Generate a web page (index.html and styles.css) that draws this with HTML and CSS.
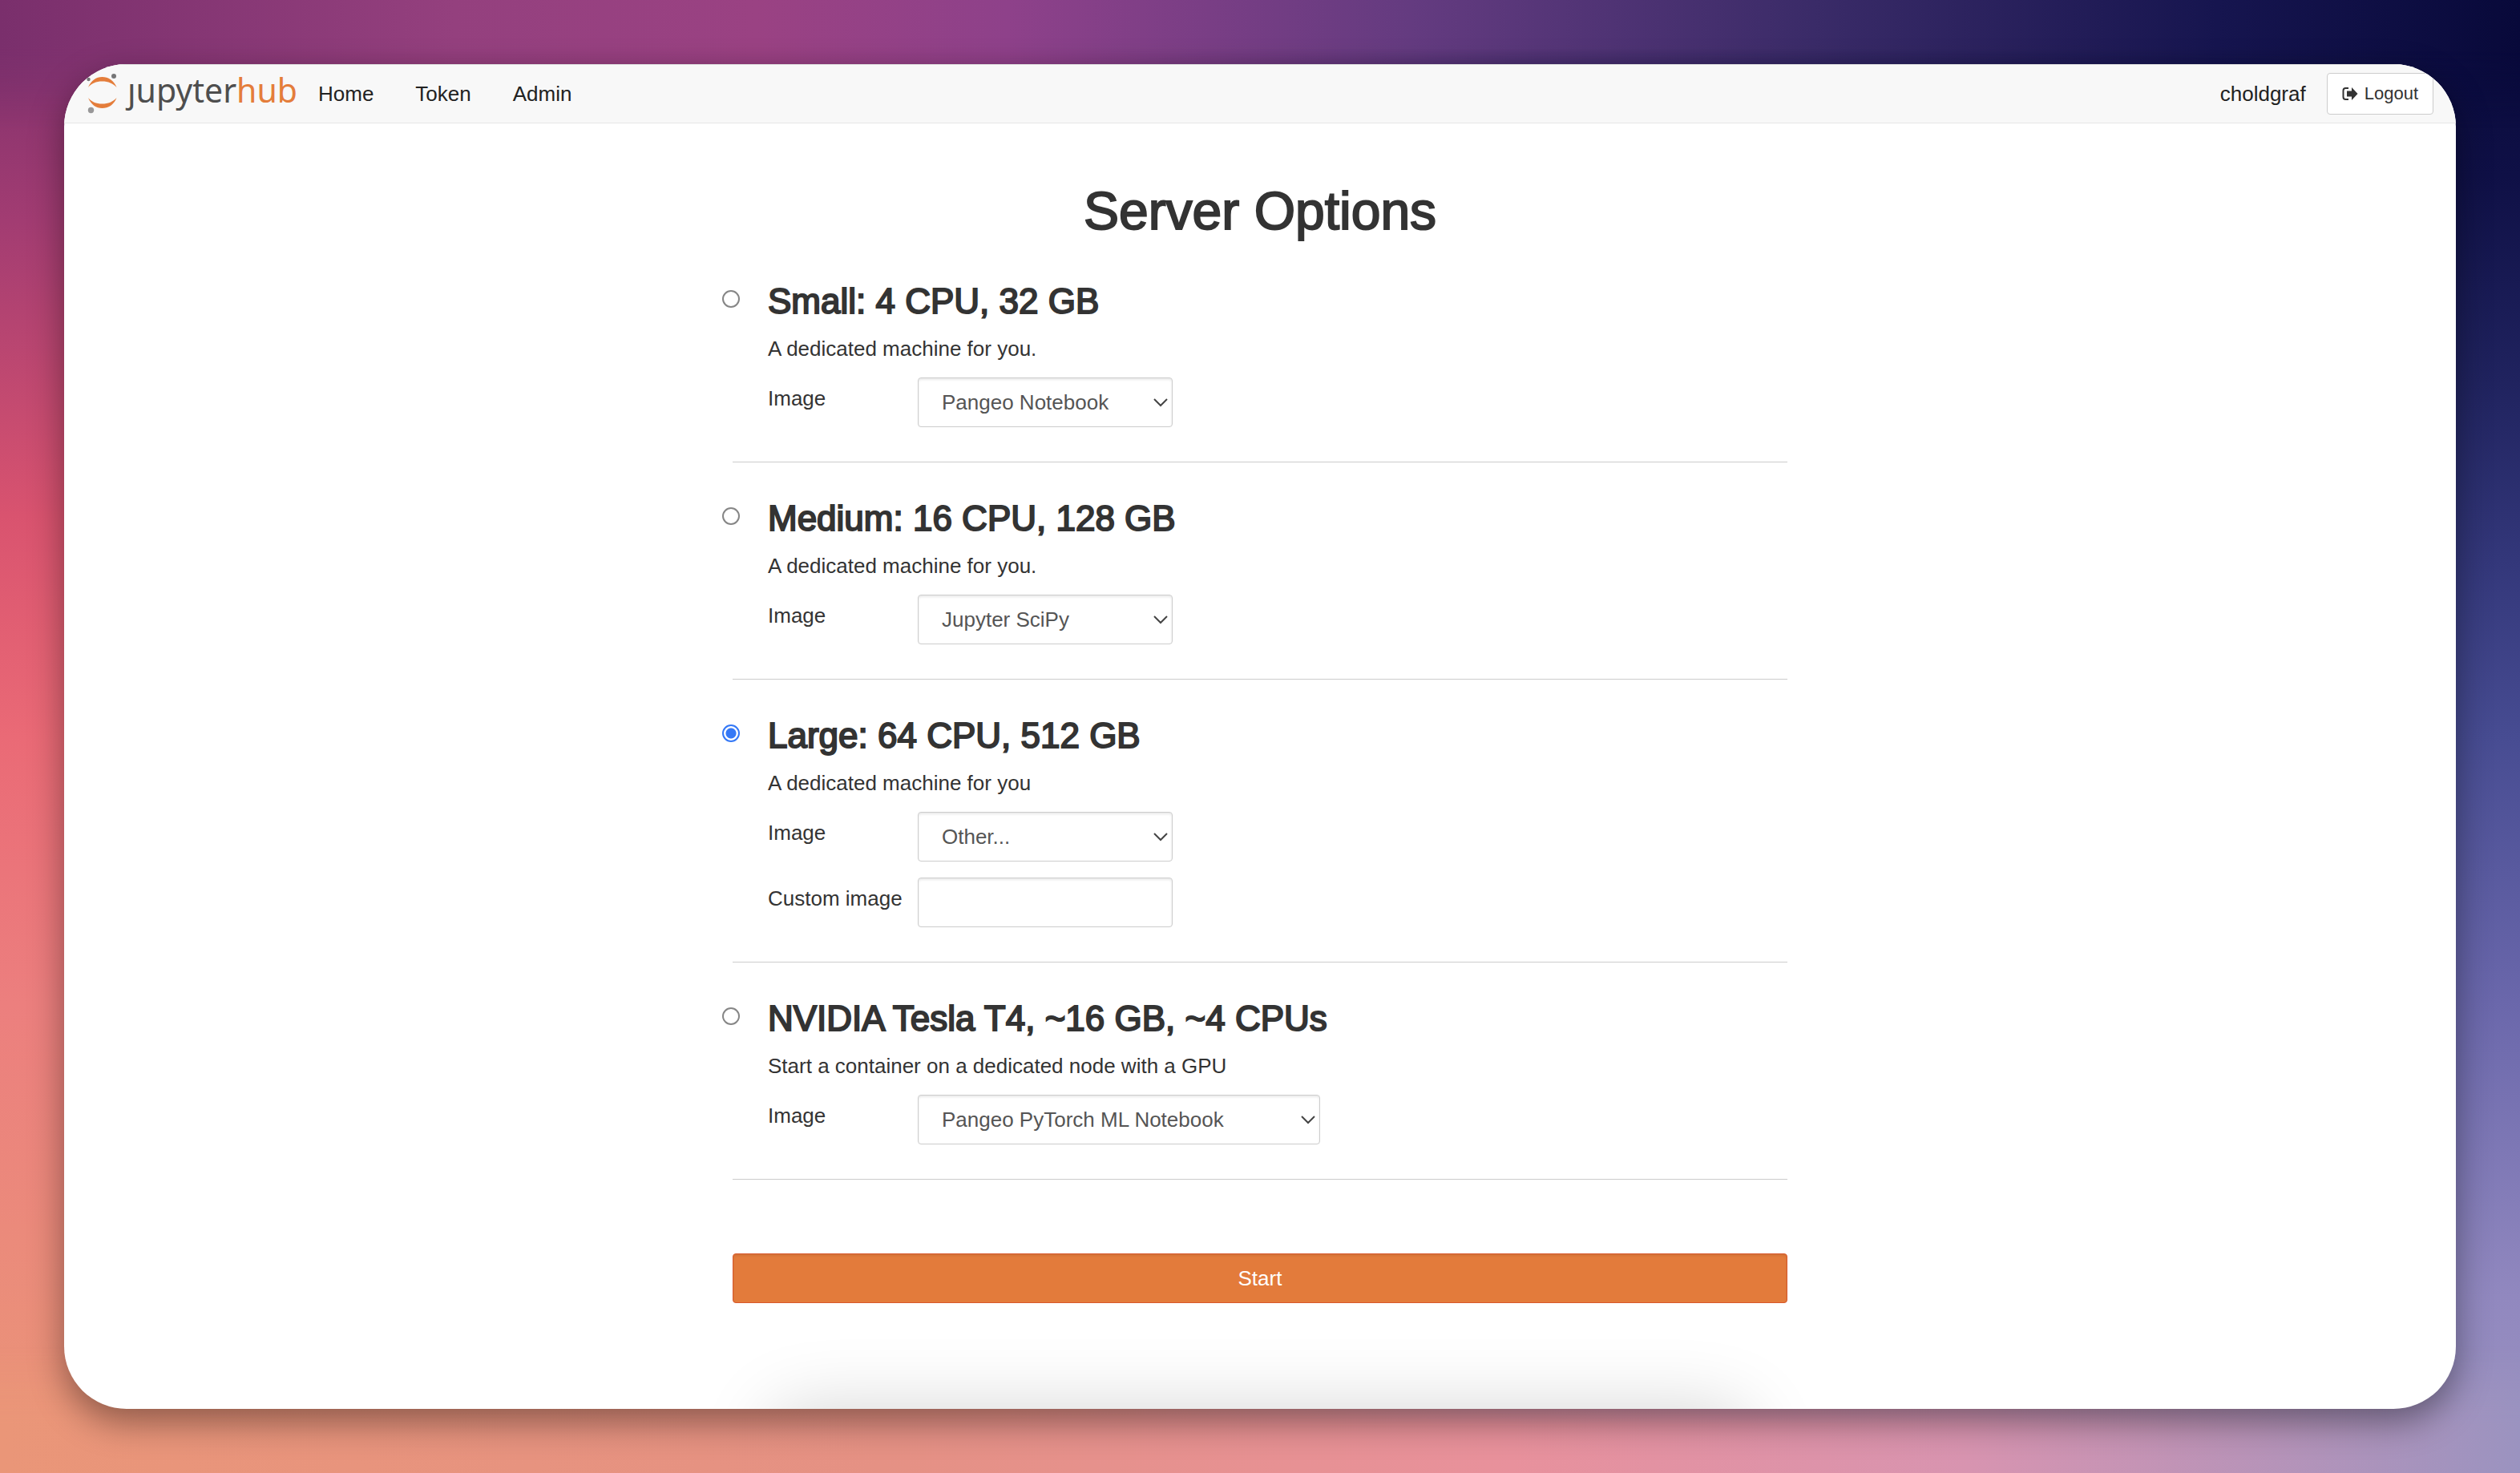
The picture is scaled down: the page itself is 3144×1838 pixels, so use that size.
FILE: index.html
```html
<!DOCTYPE html>
<html lang="en">
<head>
<meta charset="utf-8">
<title>JupyterHub</title>
<link rel="stylesheet" href="styles.css">
</head>
<body>
<div class="backdrop"><div class="sides"></div></div>
<div class="window">
  <nav class="navbar">
    <a class="brand" href="#" aria-label="jupyterhub">
      <svg class="brand-mark" viewBox="0 0 38 50" aria-hidden="true">
        <path fill="#e47d3b" d="M2 17C6 8 12 4 19.500 4S34 8 37.500 17C33 12 27 9.500 19.500 9.500S6 12 2 17ZM2 30C6 39 12 43 19.500 43S34 39 37.500 30C33 35 27 37.500 19.500 37.500S6 35 2 30Z"/>
        <circle cx="34" cy="3" r="3" fill="#767677"/>
        <circle cx="2.500" cy="7" r="2.200" fill="#767677"/>
        <circle cx="5.500" cy="45.500" r="3.700" fill="#989798"/>
      </svg>
      <span class="brand-name">ȷupyter<span class="brand-hub">hub</span></span>
    </a>
    <a class="nav-link" href="#">Home</a>
    <a class="nav-link" href="#">Token</a>
    <a class="nav-link" href="#">Admin</a>
    <span class="user">choldgraf</span>
    <a class="logout" href="#">
      <svg class="logout-icon" viewBox="0 0 20 18" aria-hidden="true">
        <path fill="none" stroke="#333" stroke-width="2" d="M8 2H4.500Q1.500 2 1.500 5V13Q1.500 16 4.500 16H8"/>
        <path fill="#333" d="M6 5.500H12V1L19.500 9L12 17V12.500H6Z"/>
      </svg>
      Logout
    </a>
  </nav>
  <main>
    <h1>Server Options</h1>
    <form class="options">
      <section class="option">
        <input class="radio" type="radio" name="profile" id="small">
        <div class="details">
          <h2><label for="small">Small: 4 CPU, 32 GB</label></h2>
          <p>A dedicated machine for you.</p>
          <div class="fields">
            <label for="image-small">Image</label>
            <select class="control" id="image-small"><option>Pangeo Notebook</option></select>
          </div>
        </div>
      </section>
      <section class="option">
        <input class="radio" type="radio" name="profile" id="medium">
        <div class="details">
          <h2><label for="medium">Medium: 16 CPU, 128 GB</label></h2>
          <p>A dedicated machine for you.</p>
          <div class="fields">
            <label for="image-medium">Image</label>
            <select class="control" id="image-medium"><option>Jupyter SciPy</option></select>
          </div>
        </div>
      </section>
      <section class="option">
        <input class="radio" type="radio" name="profile" id="large" checked>
        <div class="details">
          <h2><label for="large">Large: 64 CPU, 512 GB</label></h2>
          <p>A dedicated machine for you</p>
          <div class="fields">
            <label for="image-large">Image</label>
            <select class="control" id="image-large"><option>Other...</option></select>
            <label for="custom-large">Custom image</label>
            <input class="control" type="text" id="custom-large">
          </div>
        </div>
      </section>
      <section class="option">
        <input class="radio" type="radio" name="profile" id="gpu">
        <div class="details">
          <h2><label for="gpu">NVIDIA Tesla T4, ~16 GB, ~4 CPUs</label></h2>
          <p>Start a container on a dedicated node with a GPU</p>
          <div class="fields">
            <label for="image-gpu">Image</label>
            <select class="control wide" id="image-gpu"><option>Pangeo PyTorch ML Notebook</option></select>
          </div>
        </div>
      </section>
      <button class="start" type="submit">Start</button>
    </form>
  </main>
</div>
</body>
</html>
```
FILE: styles.css
```css
* { box-sizing: border-box; }

body {
  margin: 0;
  min-height: 100vh;
  padding: 80px;
  display: flex;
  font: 26px/36px "Liberation Sans", Arial, sans-serif;
  color: #333;
}

/* Desktop wallpaper: one gradient per edge, blended at the corners */
.backdrop, .backdrop::before, .backdrop::after, .sides, .sides::after {
  position: absolute;
  inset: 0;
}
.backdrop { z-index: -1; overflow: hidden; }
.backdrop::before, .backdrop::after, .sides::after { content: ""; }
.sides { background: linear-gradient(#7a2f6c, #a23c72 15%, #d9536f 35%, #ea6a76 50%, #ec7f7e 68%, #ea9678); }
.sides::after {
  background: linear-gradient(#08093a, #0f1046 12%, #20235f 26%, #33377a 38%, #474c92 50%, #6a67ab 68%, #9188bf 88%, #9b93c0);
  mask-image: linear-gradient(90deg, transparent 40%, #000 60%);
}
.backdrop::before {
  z-index: 1;
  background: linear-gradient(90deg, #7a2f6c, #94407e 18%, #9a4283 30%, #8e418a 40%, #643b80 56%, #3a2b68 72%, #16154f 88%, #08093a);
  mask-image: linear-gradient(#000 60px, transparent 160px);
}
.backdrop::after {
  z-index: 1;
  background: linear-gradient(90deg, #ea9678, #e59184 35%, #e8919c 60%, #d894b0 78%, #9b93c0);
  mask-image: linear-gradient(0deg, #000 60px, transparent 160px);
}

.window {
  position: relative;
  flex: 1;
  overflow: hidden;
  border-radius: 78px;
  background: #fff;
  box-shadow: 0 16px 44px rgba(0, 0, 0, .4);
}
/* Soft shade rising from below the bottom edge */
.window::after {
  content: "";
  position: absolute;
  top: 100%;
  left: 0;
  right: 0;
  width: 1220px;
  height: 200px;
  margin: 0 auto;
  border-radius: 40px;
  box-shadow: 0 0 90px rgba(0, 0, 0, .17);
}

.navbar {
  display: flex;
  align-items: center;
  height: 74px;
  padding: 0 28px;
  gap: 52px;
  border-top: 1px solid #ddd;
  border-bottom: 1px solid #e7e7e7;
  background: #f8f8f8;
}
.navbar a { color: #222; text-decoration: none; }
.navbar .brand {
  display: flex;
  align-items: flex-start;
  gap: 13px;
  margin-right: -26px;
  color: #4e4e4e;
}
.brand-mark { width: 38px; height: 50px; }
.brand-name { font: 41px/40px "Noto Sans", sans-serif; }
.navbar .brand-hub { color: #e47d3b; }
.user { margin-left: auto; color: #222; }
.navbar .logout {
  display: flex;
  align-items: center;
  gap: 8px;
  height: 52px;
  margin-left: -26px;
  padding: 0 18px;
  border: 1px solid #ccc;
  border-radius: 4px;
  background: #fff;
  color: #333;
  font-size: 22px;
}
.logout-icon { width: 20px; height: 18px; }

main {
  width: 100%;
  max-width: 1316px;
  margin: 0 auto;
  padding: 73px 0 94px;
}
h1, h2 { margin: 0; font-weight: 400; -webkit-text-stroke: 2px; }
h1 { font-size: 66px; line-height: 72px; text-align: center; }

.options { padding-top: 51px; }
.option {
  display: flex;
  gap: 35px;
  margin-left: -13px;
  position: relative;
  padding-bottom: 88px;
}
.option::after {
  content: "";
  position: absolute;
  left: 13px;
  right: 0;
  bottom: 44px;
  border-top: 1px solid #ccc;
}
.radio {
  appearance: none;
  flex: none;
  width: 22px;
  height: 22px;
  margin: 12px 0 0;
  border: 2px solid #868686;
  border-radius: 50%;
  background: #fff;
}
.radio:checked {
  border-color: #3478f6;
  background: radial-gradient(circle, #3478f6 6px, #fff 7px);
}
h2 { font-size: 44px; line-height: 52px; }
p { margin: 15px 0 14px; }
.fields {
  display: grid;
  grid-template-columns: 165px auto;
  justify-content: start;
  gap: 20px 22px;
  padding-top: 4px;
}
.fields label { padding-top: 8px; white-space: nowrap; }
.control {
  width: 318px;
  height: 62px;
  padding: 0 29px;
  border: 1px solid #ccc;
  border-radius: 4px;
  background: #fff;
  box-shadow: inset 0 2px 3px rgba(0, 0, 0, .09);
  color: #555;
  font: inherit;
}
.wide { width: 502px; }
select.control {
  appearance: none;
  background: #fff url("data:image/svg+xml,%3Csvg xmlns='http://www.w3.org/2000/svg' width='18' height='11'%3E%3Cpath d='M1 1L9 9L17 1' fill='none' stroke='%23444' stroke-width='2'/%3E%3C/svg%3E") no-repeat right 5px center;
}
.start {
  display: block;
  width: 100%;
  height: 62px;
  margin-top: 48px;
  border: 1px solid #d9582b;
  border-radius: 4px;
  background: #e37b3b;
  box-shadow: inset 0 2px 3px rgba(0, 0, 0, .08);
  color: #fff;
  font: inherit;
}
```
